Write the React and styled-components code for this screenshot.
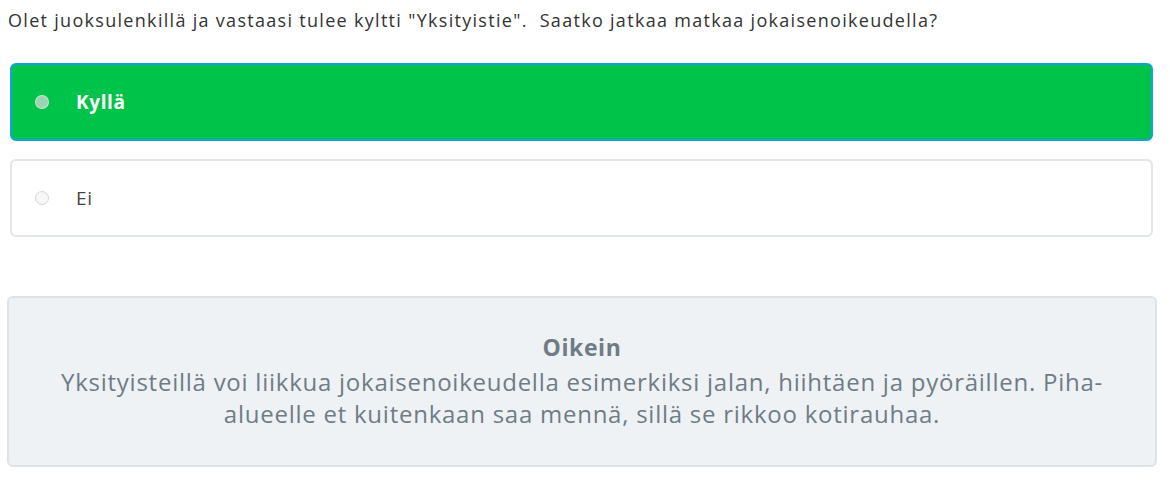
import React from "react"
import styled, { createGlobalStyle } from "styled-components"

const GlobalStyle = createGlobalStyle`
  body {
    margin: 0;
    background: #ffffff;
    font-family: "Open Sans", "Noto Sans", sans-serif;
  }
`

const options = [
  { label: "Kyllä", selected: true },
  { label: "Ei", selected: false },
]

function App() {
  return (
    <Wrapper>
      <GlobalStyle />
      <Question>
        Olet juoksulenkillä ja vastaasi tulee kyltti "Yksityistie".{"\u00a0"} Saatko jatkaa matkaa jokaisenoikeudella?
      </Question>
      <Options>
        {options.map((o) => (
          <Option key={o.label} $selected={o.selected}>
            <Radio $selected={o.selected} />
            <Label $selected={o.selected}>{o.label}</Label>
          </Option>
        ))}
      </Options>
      <Feedback>
        <FeedbackTitle>Oikein</FeedbackTitle>
        <FeedbackText>
          Yksityisteillä voi liikkua jokaisenoikeudella esimerkiksi jalan, hiihtäen ja pyöräillen. Piha-alueelle et kuitenkaan saa mennä, sillä se rikkoo kotirauhaa.
        </FeedbackText>
      </Feedback>
    </Wrapper>
  )
}

export default App

const Wrapper = styled.div`
  width: 1170px;
  padding: 8px 0 0;
`
const Question = styled.p`
  margin: 0 0 0 8px;
  font-size: 18px;
  letter-spacing: 1.3px;
  line-height: 24px;
  color: #333333;
`
const Options = styled.div`
  display: flex;
  flex-direction: column;
  gap: 18px;
  margin: 31px 17px 0 10px;
`
const Option = styled.div`
  display: flex;
  align-items: center;
  height: 78px;
  box-sizing: border-box;
  padding-left: 23px;
  border-radius: 6px;
  border: 2px solid ${(p) => (p.$selected ? "#10a0e6" : "#e2e6eb")};
  background: ${(p) => (p.$selected ? "#00c34a" : "#ffffff")};
`
const Radio = styled.span`
  width: 14px;
  height: 14px;
  box-sizing: border-box;
  border-radius: 50%;
  border: 1px solid ${(p) => (p.$selected ? "rgba(255,255,255,0.45)" : "#d6d6d6")};
  background: ${(p) => (p.$selected ? "rgba(220,220,220,0.7)" : "#f7f7f7")};
  margin-right: 27px;
`
const Label = styled.span`
  font-size: 19px;
  letter-spacing: 0.6px;
  font-weight: ${(p) => (p.$selected ? 700 : 400)};
  color: ${(p) => (p.$selected ? "#ffffff" : "#444444")};
`
const Feedback = styled.div`
  margin: 59px 13px 0 7px;
  height: 171px;
  box-sizing: border-box;
  border: 2px solid #dfe3e8;
  border-radius: 6px;
  background: #eef2f5;
  display: flex;
  flex-direction: column;
  align-items: center;
  text-align: center;
  color: #6f7c86;
  padding: 33px 30px 0;
`
const FeedbackTitle = styled.div`
  font-size: 23px;
  font-weight: 700;
  letter-spacing: 0.6px;
  line-height: 32px;
  margin-bottom: 3px;
`
const FeedbackText = styled.div`
  font-size: 24px;
  letter-spacing: 0.75px;
  line-height: 32px;
  max-width: 1090px;
`
